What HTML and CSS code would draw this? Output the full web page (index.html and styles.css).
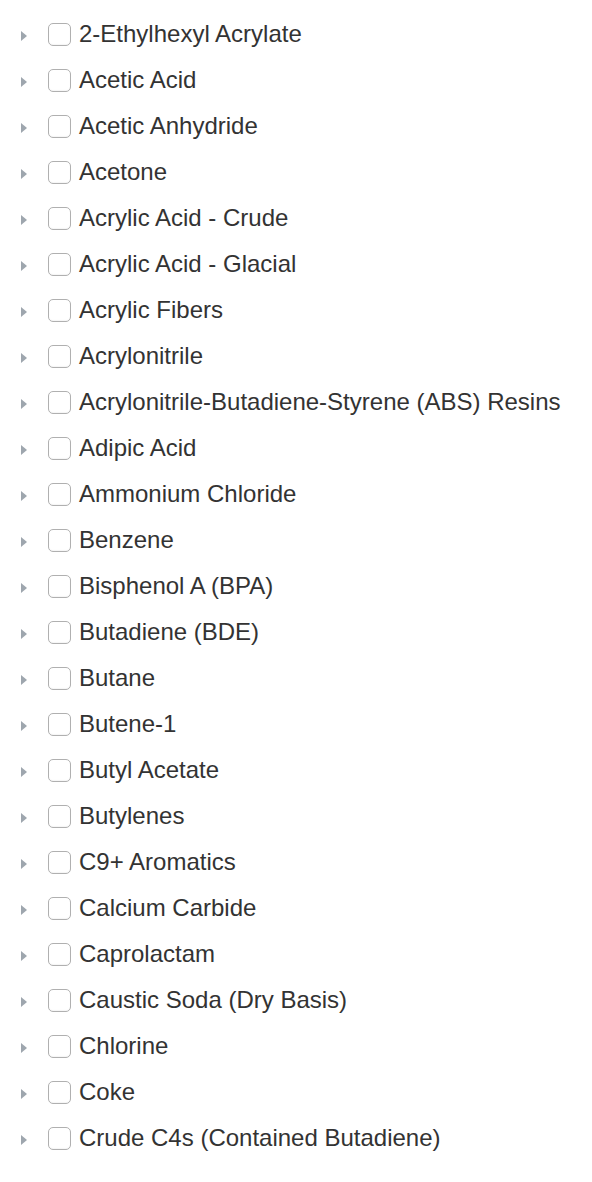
FILE: index.html
```html
<!DOCTYPE html>
<html>
<head>
<meta charset="utf-8">
<link rel="stylesheet" href="styles.css">
</head>
<body>
<ul class="tree">
<li class="row"><span class="arrow"></span><span class="box"></span><span class="label">2-Ethylhexyl Acrylate</span></li>
<li class="row"><span class="arrow"></span><span class="box"></span><span class="label">Acetic Acid</span></li>
<li class="row"><span class="arrow"></span><span class="box"></span><span class="label">Acetic Anhydride</span></li>
<li class="row"><span class="arrow"></span><span class="box"></span><span class="label">Acetone</span></li>
<li class="row"><span class="arrow"></span><span class="box"></span><span class="label">Acrylic Acid - Crude</span></li>
<li class="row"><span class="arrow"></span><span class="box"></span><span class="label">Acrylic Acid - Glacial</span></li>
<li class="row"><span class="arrow"></span><span class="box"></span><span class="label">Acrylic Fibers</span></li>
<li class="row"><span class="arrow"></span><span class="box"></span><span class="label">Acrylonitrile</span></li>
<li class="row"><span class="arrow"></span><span class="box"></span><span class="label">Acrylonitrile-Butadiene-Styrene (ABS) Resins</span></li>
<li class="row"><span class="arrow"></span><span class="box"></span><span class="label">Adipic Acid</span></li>
<li class="row"><span class="arrow"></span><span class="box"></span><span class="label">Ammonium Chloride</span></li>
<li class="row"><span class="arrow"></span><span class="box"></span><span class="label">Benzene</span></li>
<li class="row"><span class="arrow"></span><span class="box"></span><span class="label">Bisphenol A (BPA)</span></li>
<li class="row"><span class="arrow"></span><span class="box"></span><span class="label">Butadiene (BDE)</span></li>
<li class="row"><span class="arrow"></span><span class="box"></span><span class="label">Butane</span></li>
<li class="row"><span class="arrow"></span><span class="box"></span><span class="label">Butene-1</span></li>
<li class="row"><span class="arrow"></span><span class="box"></span><span class="label">Butyl Acetate</span></li>
<li class="row"><span class="arrow"></span><span class="box"></span><span class="label">Butylenes</span></li>
<li class="row"><span class="arrow"></span><span class="box"></span><span class="label">C9+ Aromatics</span></li>
<li class="row"><span class="arrow"></span><span class="box"></span><span class="label">Calcium Carbide</span></li>
<li class="row"><span class="arrow"></span><span class="box"></span><span class="label">Caprolactam</span></li>
<li class="row"><span class="arrow"></span><span class="box"></span><span class="label">Caustic Soda (Dry Basis)</span></li>
<li class="row"><span class="arrow"></span><span class="box"></span><span class="label">Chlorine</span></li>
<li class="row"><span class="arrow"></span><span class="box"></span><span class="label">Coke</span></li>
<li class="row"><span class="arrow"></span><span class="box"></span><span class="label">Crude C4s (Contained Butadiene)</span></li>
</ul>
</body>
</html>
```

FILE: styles.css
```css
html, body {
  margin: 0;
  padding: 0;
  background: #fff;
}
.tree {
  list-style: none;
  margin: 0;
  padding: 11px 0 0 0;
  font-family: "Liberation Sans", Arial, sans-serif;
  font-size: 24px;
  color: #333;
}
.row {
  display: flex;
  align-items: center;
  height: 46px;
}
.arrow {
  width: 0;
  height: 0;
  margin-left: 21px;
  border-top: 5px solid transparent;
  border-bottom: 5px solid transparent;
  border-left: 6px solid #9ea6ae;
  margin-top: 3px;
}
.box {
  box-sizing: border-box;
  width: 23px;
  height: 23px;
  margin-left: 21px;
  border: 1px solid #b0b0b0;
  border-radius: 5px;
  background: #fff;
  box-shadow: inset 0 -1px 1px rgba(0,0,0,0.04);
}
.label {
  margin-left: 8px;
  white-space: nowrap;
}
```
